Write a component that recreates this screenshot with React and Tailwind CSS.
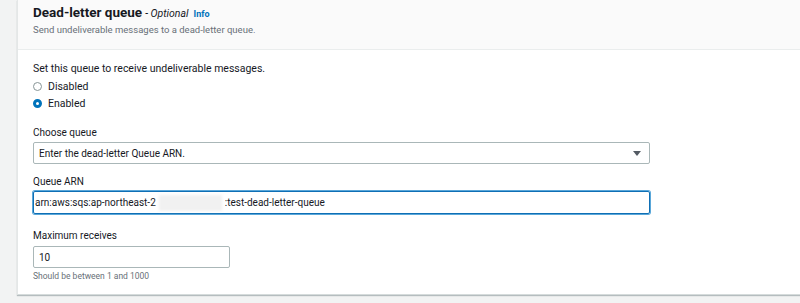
export default function App() {
  return (
    <div className="w-[800px] h-[303px] bg-[#f2f3f3] pl-[17px] overflow-hidden" style={{ fontFamily: 'Roboto, "Liberation Sans", sans-serif' }}>
      <div className="bg-white border-l border-[#e4e7e7] shadow-[0_1px_1px_0_rgba(0,28,36,0.25)] border-b border-b-[#d5dbdb] h-[295px]">
        <div className="bg-[#fafafa] border-b border-[#eaeded] h-[50px] px-[15px] pt-[4px]">
          <div className="flex items-baseline h-[16px] leading-[16px]">
            <span className="text-[13.5px] font-bold text-[#16191f]">Dead-letter queue</span>
            <span className="text-[10.5px] italic text-[#16191f] ml-[3px]">- Optional</span>
            <span className="text-[9px] font-bold text-[#0073bb] ml-[5px]">Info</span>
          </div>
          <div className="text-[9.5px] text-[#687078] leading-[12px] mt-[3.5px]">Send undeliverable messages to a dead-letter queue.</div>
        </div>
        <div className="px-[15px] pt-[12px] text-[#16191f] text-[10.5px]">
          <div className="leading-[14px]">Set this queue to receive undeliverable messages.</div>
          <div className="flex items-center mt-[2px] h-[17px]">
            <span className="w-[9px] h-[9px] rounded-full border border-[#879596] bg-white mr-[6px]"></span>
            <span>Disabled</span>
          </div>
          <div className="flex items-center h-[17px]">
            <span className="w-[9px] h-[9px] rounded-full border-[3px] border-[#0073bb] bg-white mr-[6px]"></span>
            <span>Enabled</span>
          </div>
          <div className="leading-[14px] mt-[14px] text-[10px]">Choose queue</div>
          <div className="w-[617px] h-[22px] mt-[2px] border border-[#aab7b8] rounded-[2px] flex items-center justify-between pl-[5px] pr-[8px] text-[10px]">
            <span>Enter the dead-letter Queue ARN.</span>
            <svg width="8" height="5" viewBox="0 0 8 5"><path d="M0 0 L8 0 L4 5 Z" fill="#545b64" /></svg>
          </div>
          <div className="leading-[14px] mt-[11px] text-[10px]">Queue ARN</div>
          <div className="w-[617px] h-[23px] mt-[2px] border border-[#0f6fb5] rounded-[2px] shadow-[0_0_0_1px_#5aa7d9] flex items-center pl-[1px] text-[10px]">
            <span>arn:aws:sqs:ap-northeast-2</span>
            <span className="w-[63px] h-[16px] bg-[#f1f1f1] mx-[3px] blur-[1.5px]"></span>
            <span>:test-dead-letter-queue</span>
          </div>
          <div className="leading-[14px] mt-[15px] text-[10px]">Maximum receives</div>
          <div className="w-[197px] h-[22px] mt-[3px] border border-[#aab7b8] rounded-[2px] flex items-center pl-[5px] text-[10px]">
            <span>10</span>
          </div>
          <div className="text-[8.5px] leading-[12px] text-[#687078] mt-[2px]">Should be between 1 and 1000</div>
        </div>
      </div>
    </div>
  );
}
